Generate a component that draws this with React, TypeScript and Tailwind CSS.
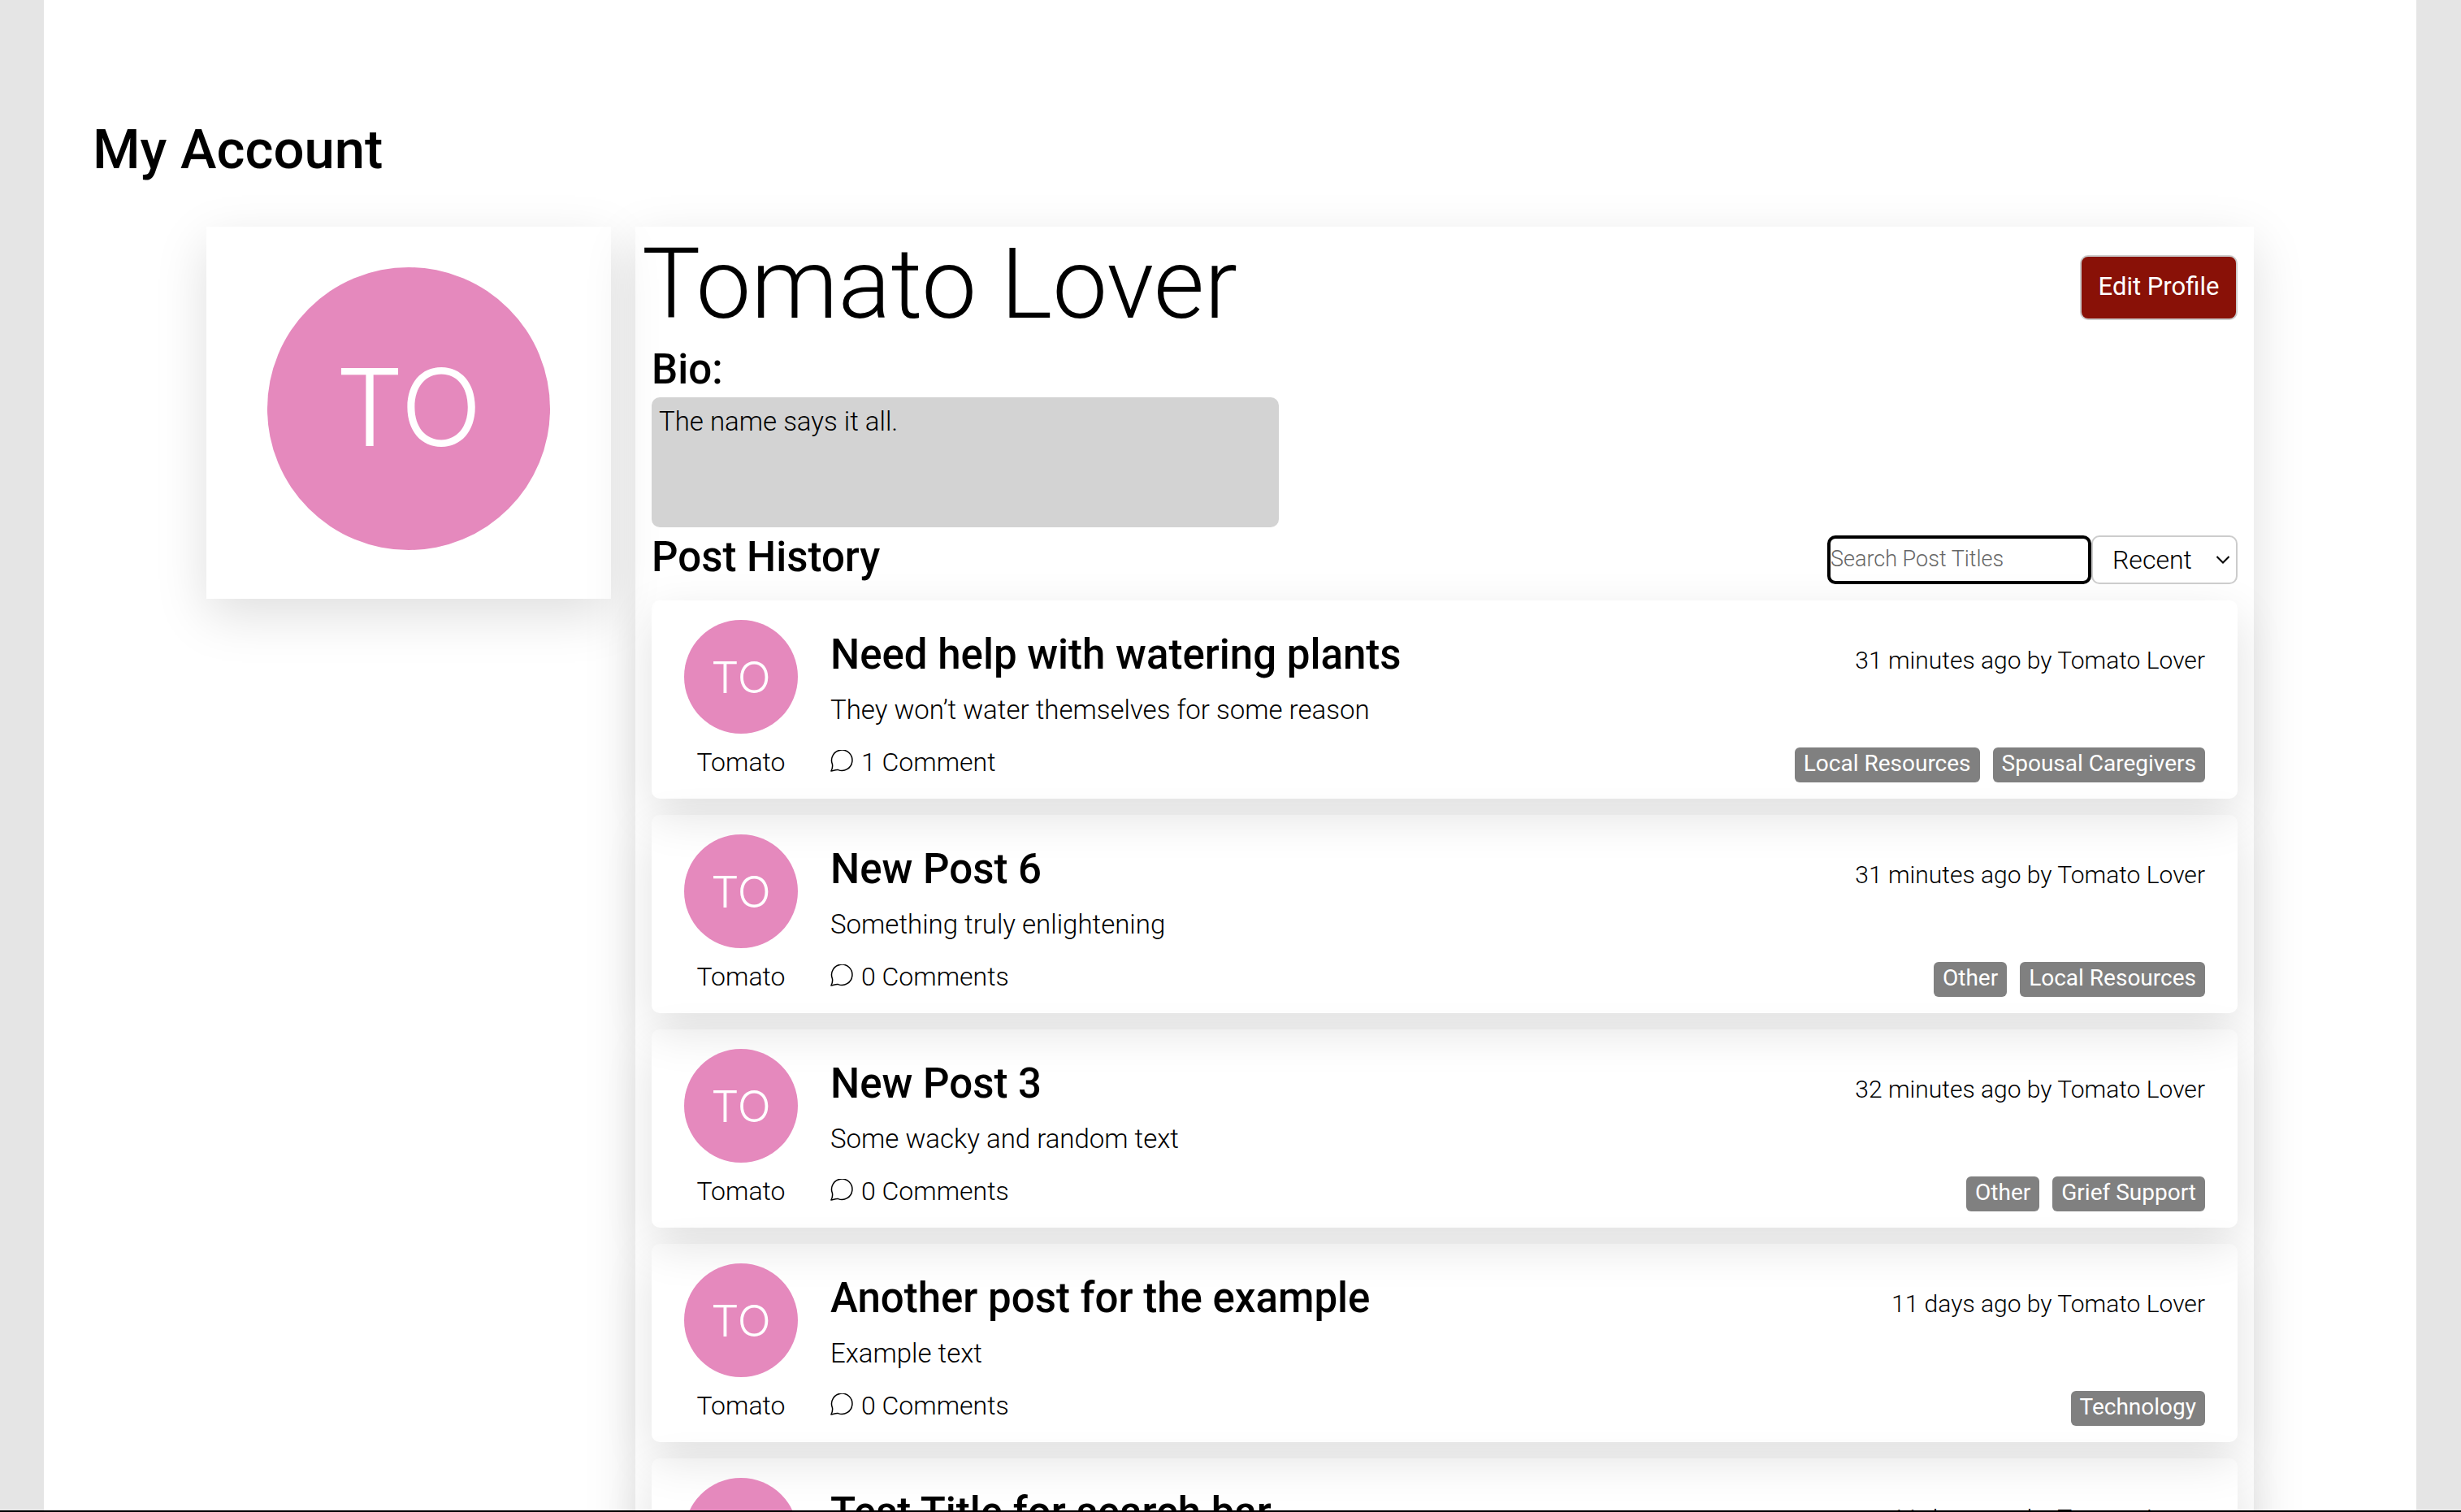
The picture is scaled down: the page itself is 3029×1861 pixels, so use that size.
import React from "react";

type Post = {
  id: number;
  title: string;
  body: string;
  comments: number;
  when: string;
  tags: string[];
};

const posts: Post[] = [
  { id: 1, title: "Need help with watering plants", body: "They won’t water themselves for some reason", comments: 1, when: "31 minutes ago", tags: ["Local Resources", "Spousal Caregivers"] },
  { id: 2, title: "New Post 6", body: "Something truly enlightening", comments: 0, when: "31 minutes ago", tags: ["Other", "Local Resources"] },
  { id: 3, title: "New Post 3", body: "Some wacky and random text", comments: 0, when: "32 minutes ago", tags: ["Other", "Grief Support"] },
  { id: 4, title: "Another post for the example", body: "Example text", comments: 0, when: "11 days ago", tags: ["Technology"] },
  { id: 5, title: "Test Title for search bar", body: "Example text", comments: 0, when: "11 days ago", tags: ["Other"] },
];

function CommentIcon() {
  return (
    <svg viewBox="0 0 28 27" className="mb-1 h-[27px] w-7" fill="none" stroke="currentColor" strokeWidth="1.5" strokeLinejoin="round" aria-hidden="true">
      <path d="M0.9 26 C2.6 23 3.1 20.8 2.4 17.4 A12.7 12.7 0 1 1 9.6 24.6 C6.8 24 4 25.6 0.9 26 Z" />
    </svg>
  );
}

function PostCard({ post }: { post: Post }) {
  return (
    <article className="flex gap-10 rounded-[10px] px-10 pt-6 pb-5 shadow-[0_20px_60px_rgba(0,0,0,0.12)]">
      <div className="flex w-[140px] flex-col items-center">
        <div className="flex size-[140px] items-center justify-center rounded-full bg-[#e589bd] font-['Inter',sans-serif] text-[54px] text-white [font-optical-sizing:none]">TO</div>
        <p className="mt-2.5 leading-[50px]">Tomato</p>
      </div>
      <div className="flex-1">
        <h3 className="mt-3 text-[51px] leading-[62px] font-medium">{post.title}</h3>
        <p className="mt-3 text-[33px] leading-[50px]">{post.body}</p>
        <p className="mt-3.5 flex items-center gap-2.5 leading-[50px]">
          <CommentIcon />
          {post.comments} {post.comments === 1 ? "Comment" : "Comments"}
        </p>
      </div>
      <div className="flex flex-col items-end justify-between pt-[25px]">
        <p className="text-[30px] leading-[50px]">{post.when} by Tomato Lover</p>
        <ul className="flex gap-4">
          {post.tags.map((tag) => (
            <li key={tag} className="rounded-[6px] bg-[#808080] px-[11px] pb-[3px] text-[28px] leading-10 font-normal text-white">{tag}</li>
          ))}
        </ul>
      </div>
    </article>
  );
}

export default function App() {
  return (
    <div className="h-screen overflow-hidden border-b-2 border-black bg-[#e5e5e5] pr-[55px] pl-[54px] font-['Roboto',sans-serif] text-[32px] font-light text-black">
      <main className="min-h-full bg-white pt-[144px]">
        <h1 className="pl-[60px] text-[67px] leading-[80px] font-medium">My Account</h1>
        <div className="mt-[55px] grid grid-cols-[1fr_4fr] items-start gap-[30px] px-[200px]">
          <section className="flex justify-center pt-[50px] pb-[60px] shadow-[0_20px_60px_rgba(0,0,0,0.13)]">
            <div className="flex size-[348px] items-center justify-center rounded-full bg-[#e589bd] pb-1 font-['Inter',sans-serif] text-[132px] text-white [font-optical-sizing:none]">TO</div>
          </section>
          <section className="px-5 pb-5 shadow-[0_20px_60px_rgba(0,0,0,0.13)]">
            <div className="-ml-3 flex items-start justify-between pb-[7px]">
              <h2 className="pt-1 text-[121px] leading-[134px]">Tomato Lover</h2>
              <button type="button" className="mt-[35px] h-20 w-[194px] rounded-[10px] border-2 border-[#ccc] bg-[#891107] pb-0.5 text-[31px] font-normal text-white">Edit Profile</button>
            </div>
            <h3 className="text-[51px] leading-[62px] font-medium">Bio:</h3>
            <p className="mt-[3px] h-40 w-[772px] rounded-[10px] bg-[#d3d3d3] px-[9px] py-[5px] text-[33px] leading-[50px]">The name says it all.</p>
            <div className="mt-2.5 flex justify-between">
              <h3 className="text-[51px] leading-[54px] font-medium">Post History</h3>
              <div className="flex">
                <input type="text" aria-label="Search Post Titles" placeholder="Search Post Titles" className="h-[60px] w-[325px] rounded-[10px] border-4 border-black bg-white pb-0.5 text-[27px] outline-none placeholder:text-[#666]" />
                <div className="relative">
                  <select aria-label="Sort posts" className="h-[60px] w-[180px] appearance-none rounded-[10px] border-2 border-[#ccc] bg-white pl-6">
                    <option>Recent</option>
                    <option>Oldest</option>
                  </select>
                  <svg viewBox="0 0 16 10" className="pointer-events-none absolute top-[25px] right-2.5 h-2.5 w-4" fill="none" stroke="currentColor" strokeWidth="2" aria-hidden="true">
                    <path d="M0.5 1 L8 8.5 L15.5 1" />
                  </svg>
                </div>
              </div>
            </div>
            <div className="mt-5 flex flex-col gap-5">
              {posts.map((post) => (
                <PostCard key={post.id} post={post} />
              ))}
            </div>
          </section>
        </div>
      </main>
    </div>
  );
}
